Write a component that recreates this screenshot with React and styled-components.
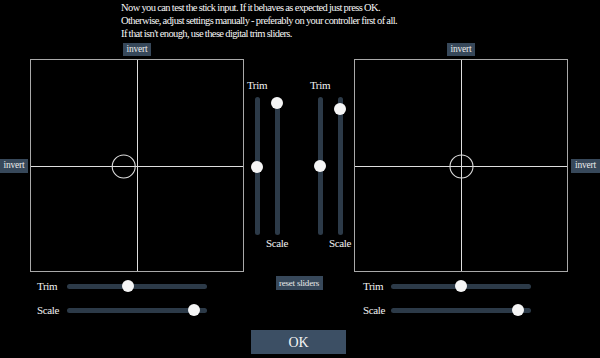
import styled, { createGlobalStyle } from "styled-components";

const GlobalStyle = createGlobalStyle`
  html, body {
    margin: 0;
    padding: 0;
    background: #000;
  }
  * {
    box-sizing: border-box;
  }
`;

const Page = styled.div`
  width: 600px;
  height: 358px;
  display: flex;
  flex-direction: column;
  background: #000;
  color: #f2f2f2;
  font-family: "Liberation Serif", "Times New Roman", serif;
  overflow: hidden;
`;

const Intro = styled.div`
  height: 43px;
  padding: 1px 0 0 121px;
  font-size: 10.5px;
  line-height: 13px;
  letter-spacing: -0.6px;
  word-spacing: -0.2px;
  color: #f6f6f6;
`;

const StickRow = styled.div`
  display: grid;
  grid-template-columns: 30px 214px 110px 214px 32px;
  grid-template-rows: 13px 213px;
  row-gap: 3px;
`;

const SmallButton = styled.button`
  height: 13px;
  padding: 0 4px;
  border: none;
  border-radius: 0;
  background: #37485a;
  color: #ececec;
  font-family: "Liberation Serif", "Times New Roman", serif;
  font-size: 9.5px;
  line-height: 13px;
  letter-spacing: -0.2px;
  cursor: pointer;
`;

const TopInvert = styled(SmallButton)`
  grid-column: ${(p) => p.$col};
  grid-row: 1;
  justify-self: center;
  width: 28px;
  padding: 0;
`;

const SideInvert = styled(SmallButton)`
  grid-column: ${(p) => p.$col};
  grid-row: 2;
  align-self: center;
  justify-self: ${(p) => (p.$side === "left" ? "start" : "end")};
  width: ${(p) => (p.$side === "left" ? "28px" : "29px")};
  height: 14px;
  padding: 0;
`;

const Field = styled.div`
  grid-column: ${(p) => p.$col};
  grid-row: 2;
  border: 1px solid #a9a9a9;
  background: #000;
  svg {
    display: block;
  }
`;

const MiddleSliders = styled.div`
  grid-column: 3;
  grid-row: 1 / span 2;
  display: flex;
  padding: 36px 0 0 3px;
`;

const Pair = styled.div`
  display: flex;
  & + & {
    margin-left: 23px;
  }
`;

const VCol = styled.div`
  width: 20px;
  display: flex;
  flex-direction: column;
  align-items: center;
`;

const SliderLabel = styled.span`
  height: 13px;
  font-size: 11px;
  line-height: 13px;
  letter-spacing: -0.35px;
  white-space: nowrap;
  visibility: ${(p) => (p.$hidden ? "hidden" : "visible")};
`;

const VTrack = styled.div`
  position: relative;
  width: 5px;
  height: 138px;
  margin: 5px 0 2px;
  border-radius: 3px;
  background: #2c3a48;
`;

const Thumb = styled.div`
  position: absolute;
  width: 12px;
  height: 12px;
  border-radius: 50%;
  background: #f5f5f5;
`;

const VThumb = styled(Thumb)`
  left: -3.5px;
`;

const BottomRow = styled.div`
  display: grid;
  grid-template-columns: 30px 214px 110px 214px 32px;
  height: 44px;
  margin-top: 4px;
`;

const HGroup = styled.div`
  grid-column: ${(p) => p.$col};
  display: flex;
  flex-direction: column;
  gap: 4px;
  padding-left: ${(p) => p.$pad}px;
`;

const HRow = styled.div`
  display: flex;
  align-items: center;
  height: 20px;
`;

const HLabel = styled(SliderLabel)`
  width: ${(p) => p.$w}px;
`;

const HTrack = styled.div`
  position: relative;
  width: 140px;
  height: 5px;
  border-radius: 3px;
  background: #2c3a48;
`;

const HThumb = styled(Thumb)`
  top: -3.5px;
`;

const ResetButton = styled(SmallButton)`
  grid-column: 3;
  justify-self: center;
  align-self: start;
  width: 47px;
  height: 14px;
  padding: 0;
  font-size: 9px;
  white-space: nowrap;
`;

const OkButton = styled.button`
  align-self: center;
  width: 95px;
  height: 24px;
  margin-top: 10px;
  margin-left: -3px;
  border: none;
  background: #3c4f64;
  color: #f4f4f4;
  font-family: "Liberation Serif", "Times New Roman", serif;
  font-size: 14px;
  line-height: 24px;
  cursor: pointer;
`;

function StickField({ col, x, y }) {
  const c = 106;
  return (
    <Field $col={col}>
      <svg width="212" height="211" viewBox="0 0 212 211">
        <line x1={c + 0.5} y1="0" x2={c + 0.5} y2="211" stroke="#dedede" strokeWidth="1" />
        <line x1="0" y1={c + 0.5} x2="212" y2={c + 0.5} stroke="#dedede" strokeWidth="1" />
        <circle cx={c + 0.5 + x * c} cy={c + 0.5 - y * c} r="11.5" fill="none" stroke="#dcdcdc" strokeWidth="1.1" />
      </svg>
    </Field>
  );
}

function VSlider({ label, top, value }) {
  const pos = (1 - value) * (138 - 12);
  return (
    <VCol>
      <SliderLabel $hidden={!top}>{label}</SliderLabel>
      <VTrack>
        <VThumb style={{ top: pos }} />
      </VTrack>
      <SliderLabel $hidden={top}>{label}</SliderLabel>
    </VCol>
  );
}

function HSlider({ label, value, w }) {
  return (
    <HRow>
      <HLabel $w={w}>{label}</HLabel>
      <HTrack>
        <HThumb style={{ left: value * (140 - 12) }} />
      </HTrack>
    </HRow>
  );
}

export default function App() {
  return (
    <Page>
      <GlobalStyle />
      <Intro>
        Now you can test the stick input. If it behaves as expected just press OK.
        <br />
        Otherwise, adjust settings manually - preferably on your controller first of all.
        <br />
        If that isn't enough, use these digital trim sliders.
      </Intro>

      <StickRow>
        <TopInvert $col={2}>invert</TopInvert>
        <SideInvert $col={1} $side="left">invert</SideInvert>
        <StickField col={2} x={-0.13} y={0} />

        <MiddleSliders>
          <Pair>
            <VSlider label="Trim" top value={0.49} />
            <VSlider label="Scale" value={1} />
          </Pair>
          <Pair>
            <VSlider label="Trim" top value={0.5} />
            <VSlider label="Scale" value={0.95} />
          </Pair>
        </MiddleSliders>

        <TopInvert $col={4}>invert</TopInvert>
        <StickField col={4} x={0} y={0} />
        <SideInvert $col={5} $side="right">invert</SideInvert>
      </StickRow>

      <BottomRow>
        <HGroup $col={2} $pad={7}>
          <HSlider label="Trim" value={0.43} w={30} />
          <HSlider label="Scale" value={0.945} w={30} />
        </HGroup>
        <ResetButton>reset sliders</ResetButton>
        <HGroup $col={4} $pad={9}>
          <HSlider label="Trim" value={0.5} w={28} />
          <HSlider label="Scale" value={0.945} w={28} />
        </HGroup>
      </BottomRow>

      <OkButton>OK</OkButton>
    </Page>
  );
}
